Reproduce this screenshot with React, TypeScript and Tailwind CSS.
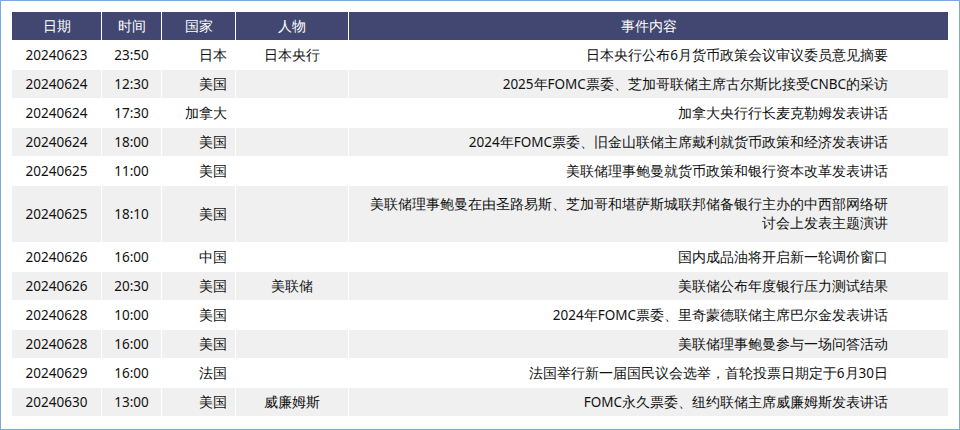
const rows: [string, string, string, string, string][] = [
  ['20240623', '23:50', '日本', '日本央行', '日本央行公布6月货币政策会议审议委员意见摘要'],
  ['20240624', '12:30', '美国', '', '2025年FOMC票委、芝加哥联储主席古尔斯比接受CNBC的采访'],
  ['20240624', '17:30', '加拿大', '', '加拿大央行行长麦克勒姆发表讲话'],
  ['20240624', '18:00', '美国', '', '2024年FOMC票委、旧金山联储主席戴利就货币政策和经济发表讲话'],
  ['20240625', '11:00', '美国', '', '美联储理事鲍曼就货币政策和银行资本改革发表讲话'],
  ['20240625', '18:10', '美国', '', '美联储理事鲍曼在由圣路易斯、芝加哥和堪萨斯城联邦储备银行主办的中西部网络研讨会上发表主题演讲'],
  ['20240626', '16:00', '中国', '', '国内成品油将开启新一轮调价窗口'],
  ['20240626', '20:30', '美国', '美联储', '美联储公布年度银行压力测试结果'],
  ['20240628', '10:00', '美国', '', '2024年FOMC票委、里奇蒙德联储主席巴尔金发表讲话'],
  ['20240628', '16:00', '美国', '', '美联储理事鲍曼参与一场问答活动'],
  ['20240629', '16:00', '法国', '', '法国举行新一届国民议会选举，首轮投票日期定于6月30日'],
  ['20240630', '13:00', '美国', '威廉姆斯', 'FOMC永久票委、纽约联储主席威廉姆斯发表讲话'],
];

export default function App() {
  return (
    <div className="w-[960px] h-[430px] bg-white border border-[#7aa7e3] p-[11px] font-['Noto_Sans_CJK_SC',sans-serif] text-[13.5px] text-[#111]">
      <table className="w-[936px] border-separate border-spacing-0 table-fixed">
        <colgroup>
          <col className="w-[90px]" />
          <col className="w-[60px]" />
          <col className="w-[74px]" />
          <col className="w-[113px]" />
          <col />
        </colgroup>
        <thead>
          <tr className="bg-[#414770] text-white h-[28px]">
            {['日期', '时间', '国家', '人物', '事件内容'].map((h) => (
              <th key={h} className="font-normal border-r border-white last:border-r-0 text-center">{h}</th>
            ))}
          </tr>
        </thead>
        <tbody>
          {rows.map((r, i) => (
            <tr key={i} className={i % 2 ? 'bg-[#f0f0f0]' : 'bg-white'}>
              <td className="h-[29px] text-center border-r border-t border-white leading-[18px]">{r[0]}</td>
              <td className="text-center border-r border-t border-white">{r[1]}</td>
              <td className="text-right pr-2 border-r border-t border-white">{r[2]}</td>
              <td className="text-center border-r border-t border-white">{r[3]}</td>
              <td className={`text-right pl-3 pr-[60px] border-t border-white leading-[19px] ${i === 5 ? 'h-[57px]' : ''}`}>{r[4]}</td>
            </tr>
          ))}
        </tbody>
      </table>
    </div>
  );
}
